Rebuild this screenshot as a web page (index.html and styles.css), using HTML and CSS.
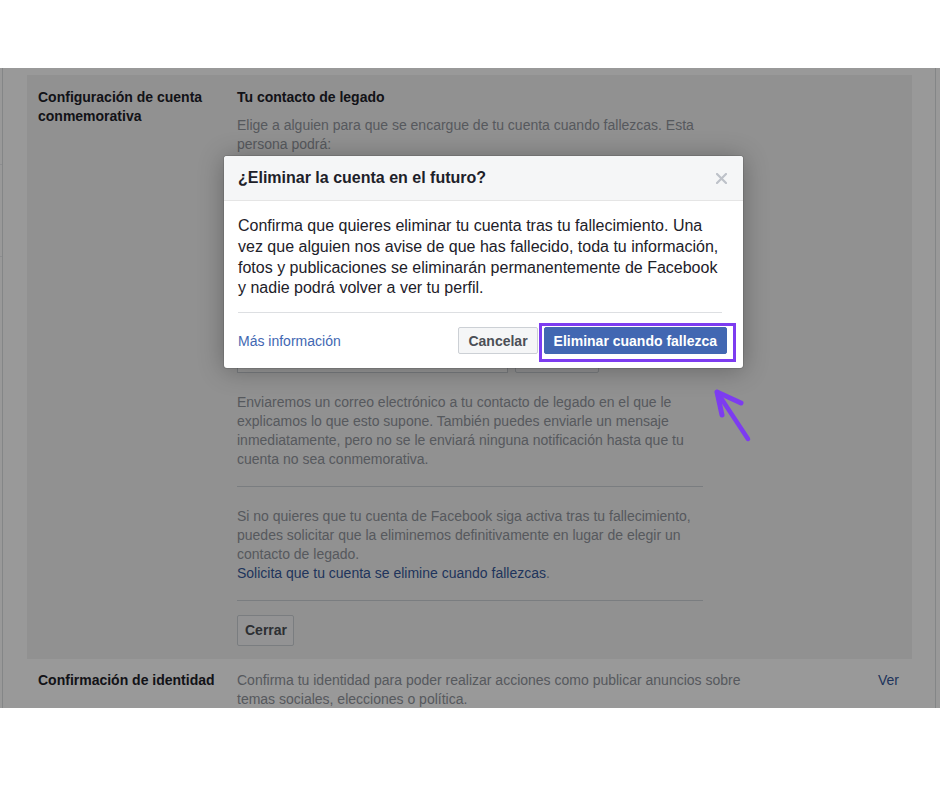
FILE: index.html
```html
<!DOCTYPE html>
<html lang="es">
  <head>
    <meta charset="UTF-8" />
    <meta name="viewport" content="width=device-width, initial-scale=1.0" />
    <title>Configuración de cuenta conmemorativa</title>
    <link rel="stylesheet" href="styles.css">
  </head>
  <body>
    <div class="screen">
      <ul class="side-nav">
        <li class="nav-first"></li>
        <li class="nav-second"></li>
        <li></li>
      </ul>

      <div class="settings">
        <!-- Sección abierta: contacto de legado -->
        <div class="row row-open">
          <div class="row-label">Configuración de cuenta conmemorativa</div>
          <div class="row-content">
            <h3 class="row-title">Tu contacto de legado</h3>
            <p class="muted intro">
              Elige a alguien para que se encargue de tu cuenta cuando fallezcas. Esta persona podrá:
            </p>
            <!-- selector de amigo (queda bajo el diálogo) -->
            <div class="field">
              <input class="friend-input" type="text" aria-label="Contacto de legado" />
              <button class="btn btn-add" aria-label="Añadir"></button>
            </div>
            <p class="muted notice">
              Enviaremos un correo electrónico a tu contacto de legado en el que le explicamos lo que
              esto supone. También puedes enviarle un mensaje inmediatamente, pero no se le enviará
              ninguna notificación hasta que tu cuenta no sea conmemorativa.
            </p>
            <hr class="sep" />
            <p class="muted">
              Si no quieres que tu cuenta de Facebook siga activa tras tu fallecimiento, puedes
              solicitar que la eliminemos definitivamente en lugar de elegir un contacto de legado.<br />
              <a href="#">Solicita que tu cuenta se elimine cuando fallezcas</a>.
            </p>
            <hr class="sep" />
            <button class="btn btn-close">Cerrar</button>
          </div>
        </div>

        <div class="row">
          <div class="row-label">Confirmación de identidad</div>
          <div class="row-content muted">
            Confirma tu identidad para poder realizar acciones como publicar anuncios sobre temas
            sociales, elecciones o política.
          </div>
          <a class="row-edit" href="#">Ver</a>
        </div>
      </div>

      <div class="overlay"></div>

      <div class="dialog">
        <div class="dialog-head">
          <span class="dialog-title">¿Eliminar la cuenta en el futuro?</span>
          <svg class="dialog-x" width="11" height="11" viewBox="0 0 11 11">
            <path d="M1 1L10 10M10 1L1 10" stroke="#bec2c9" stroke-width="2.2" stroke-linecap="round" />
          </svg>
        </div>
        <div class="dialog-body">
          Confirma que quieres eliminar tu cuenta tras tu fallecimiento. Una vez que alguien nos
          avise de que has fallecido, toda tu información, fotos y publicaciones se eliminarán
          permanentemente de Facebook y nadie podrá volver a ver tu perfil.
        </div>
        <div class="dialog-foot">
          <a class="dialog-link" href="#">Más información</a>
          <div class="dialog-actions">
            <button class="btn btn-cancel">Cancelar</button>
            <button class="btn btn-primary">Eliminar cuando fallezca</button>
          </div>
        </div>
      </div>

      <!-- marca a mano sobre el botón principal -->
      <div class="mark"></div>
      <svg class="arrow" width="50" height="60" viewBox="0 0 50 60">
        <g stroke="#7d3cf0" fill="none" stroke-linecap="round" stroke-linejoin="round">
          <path d="M39 55L8 8" stroke-width="4.5" />
          <path d="M32 19L8 8L13 31" stroke-width="5" />
        </g>
      </svg>
    </div>
  </body>
</html>
```

FILE: styles.css
```css
body {
  margin: 0;
  background: #fff;
  font-family: "Liberation Sans", Arial, sans-serif;
  color: #1d2129;
}
.screen {
  position: relative;
  display: flex;
  margin-top: 68px;
  height: 640px;
  overflow: hidden;
  background: #fff;
}
.side-nav {
  width: 2px;
  margin: 0;
  padding: 0;
  list-style: none;
}
.side-nav li {
  height: 91px;
}
.side-nav .nav-first {
  height: 96px;
  border-bottom: 1px solid #e9ebee;
}
.side-nav .nav-second {
  border-bottom: 1px solid #e9ebee;
}
.settings {
  padding: 0 23px 0 24px;
  box-sizing: border-box;
  width: 934px;
  border-left: 1px solid #dddfe2;
  border-right: 1px solid #dddfe2;
  font-size: 14px;
  line-height: 18.76px;
}
.row {
  display: grid;
  grid-template-columns: 199px 520px 1fr;
  padding: 12px 13px 0 11px;
}
.row-open {
  grid-template-columns: 199px 466px;
  margin-top: 7px;
  padding: 13px 11px 13px;
  background: #f2f2f2;
}
.row-label {
  font-weight: bold;
}
.row-title {
  margin: 0;
  font-size: 14px;
  font-weight: bold;
}
.row-edit {
  justify-self: end;
  color: #365899;
  text-decoration: none;
}
.muted {
  color: #90949c;
}
.row-content p {
  margin: 0;
}
.row-content a {
  color: #365899;
  text-decoration: none;
}
.row-content .intro {
  margin-top: 9px;
}
.field {
  display: flex;
  gap: 7px;
  margin-top: 190px;
}
.friend-input {
  width: 271px;
  height: 30px;
  box-sizing: border-box;
  border: 1px solid #ccd0d5;
  background: #fff;
  font: inherit;
  padding: 0 8px;
}
.row-content .notice {
  margin-top: 20px;
}
.sep {
  margin: 18px 0 20px;
  border: none;
  border-top: 1px solid #ccd0d5;
}
.sep + .btn {
  margin-top: -9px;
}
.btn {
  font-family: inherit;
  font-size: 14px;
  font-weight: bold;
  color: #4b4f56;
  background: #f5f6f7;
  border: 1px solid #ccd0d5;
  border-radius: 2px;
  cursor: pointer;
}
.btn-add {
  width: 84px;
  height: 30px;
}
.btn-close {
  height: 31px;
  padding: 0 7px;
  width: 57px;
}
.overlay {
  position: absolute;
  inset: 0;
  background: rgba(0, 0, 0, 0.4);
}
.dialog {
  position: absolute;
  left: 224px;
  top: 88px;
  width: 519px;
  background: #fff;
  border-radius: 3px;
  box-shadow: 0 2px 26px rgba(0, 0, 0, 0.3), 0 0 0 1px rgba(0, 0, 0, 0.1);
  overflow: hidden;
}
.dialog-head {
  display: flex;
  align-items: center;
  justify-content: space-between;
  padding: 12px 16px 12px 14px;
  background: #f5f6f7;
  border-bottom: 1px solid #e5e5e5;
}
.dialog-title {
  font-size: 16px;
  font-weight: bold;
  line-height: 20px;
}
.dialog-body {
  padding: 15px 20px 13px 14px;
  font-size: 16px;
  line-height: 20.8px;
}
.dialog-foot {
  display: flex;
  align-items: center;
  margin: 0 21px 0 14px;
  padding: 14px 0 14px;
  border-top: 1px solid #dddfe2;
}
.dialog-actions {
  display: flex;
  gap: 6px;
  margin-left: auto;
  margin-right: -5px;
}
.dialog-link {
  font-size: 14px;
  color: #4267b2;
  text-decoration: none;
}
.dialog-actions .btn {
  height: 27px;
  padding: 0 9px;
}
.btn-primary {
  color: #fff;
  background: #4267b2;
  border-color: #4267b2;
}
.mark {
  position: absolute;
  left: 539px;
  top: 255px;
  width: 197px;
  height: 39px;
  box-sizing: border-box;
  border: 3px solid #7d3cf0;
}
.arrow {
  position: absolute;
  left: 709px;
  top: 316px;
}
```
